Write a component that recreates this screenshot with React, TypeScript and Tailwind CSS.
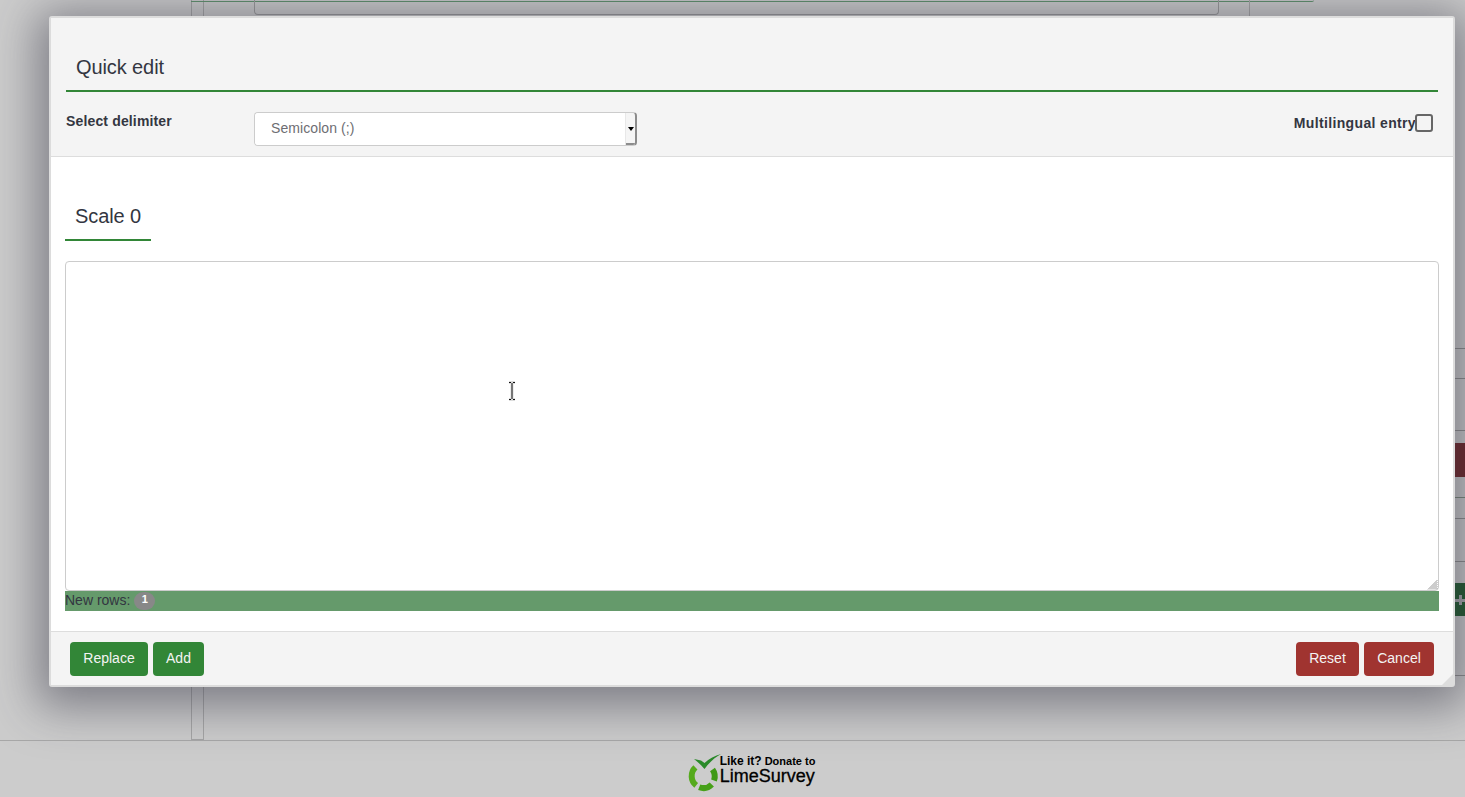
import React from "react";

function Btn({ label, tone, w }: { label: string; tone: "green" | "red"; w: string }) {
  return (
    <button
      className={
        (tone === "green" ? "bg-[#328637] " : "bg-[#a03430] ") +
        w +
        " h-[34px] pb-[2px] rounded-[4px] text-[14px] leading-[20px] text-[#f4f4f4]"
      }
    >
      {label}
    </button>
  );
}

function Logo() {
  return (
    <div className="flex items-start text-black ml-[36px]">
      <svg className="mt-[1px] overflow-visible" width="34" height="38" viewBox="0 0 34 38">
        <g fill="none" strokeWidth="6">
          <path d="M9.4 15.4A11.8 11.8 0 0 0 10.2 33.3" stroke="#55aa1c" />
          <path d="M13.2 35.2A11.8 11.8 0 0 0 25.8 32.5" stroke="#46a018" />
          <path d="M28 28.5A11.8 11.8 0 0 0 26.5 17.5" stroke="#3f9a16" />
        </g>
        <path d="M8 7L15 8.5L18.5 11C23 6.5 29 3.5 35 2C28 6 23 11 18.5 17C15 13 12 10 8 7Z" fill="#2a8a2a" />
      </svg>
      <div className="flex flex-col font-['Liberation_Sans',sans-serif] mt-[5px]">
        <div className="flex items-baseline gap-[3px] h-[11px] leading-[11px] font-bold">
          <span className="text-[12px]">Like it?</span>
          <span className="text-[11px]">Donate to</span>
        </div>
        <div className="text-[18px] leading-[18px] [-webkit-text-stroke:0.3px_black]">LimeSurvey</div>
      </div>
    </div>
  );
}

export default function App() {
  return (
    <div className="relative flex flex-col w-[1465px] h-[797px] overflow-hidden bg-[#cccccc] font-['Liberation_Sans',sans-serif] text-[14px] text-[#333641]">
      {/* page behind the dialog */}
      <div className="relative flex-1">
        <div className="absolute left-[191px] top-0 w-[13px] h-[740px] border-x border-b border-[#a5a5a5]" />
        <div className="absolute left-[191px] top-0 w-[1123px] h-[2px] rounded-br-[4px] border-b border-[#5f8f6c]" />
        <div className="absolute left-[254px] top-0 w-[965px] h-[15px] rounded-b-[4px] border-x border-b border-[#9a9a9a]" />
        <div className="absolute left-[1249px] top-0 w-px h-[20px] bg-[#a5a5a5]" />
        <div className="absolute left-[1440px] top-[348px] w-[25px] h-px bg-[#8f8f8f]" />
        <div className="absolute left-[1440px] top-[378px] w-[25px] h-px bg-[#8f8f8f]" />
        <div className="absolute left-[1440px] top-[430px] w-[25px] h-px bg-[#8f8f8f]" />
        <div className="absolute left-[1440px] top-[443px] w-[25px] h-[34px] bg-[#6f2527]" />
        <div className="absolute left-[1440px] top-[497px] w-[25px] h-px bg-[#7d8a7d]" />
        <div className="absolute left-[1440px] top-[518px] w-[25px] h-px bg-[#8f8f8f]" />
        <div className="absolute left-[1440px] top-[561px] w-[25px] h-px bg-[#8f8f8f]" />
        <div className="absolute left-[1440px] top-[583px] w-[25px] h-[33px] bg-[#1f5a2c] flex items-center justify-end">
          <span className="relative block w-[10px] h-[10px]">
            <span className="absolute left-[4px] top-0 w-[3px] h-[10px] bg-[#a9a9ac]" />
            <span className="absolute left-0 top-[4px] w-[10px] h-[3px] bg-[#a9a9ac]" />
          </span>
        </div>
        <div className="absolute left-[1440px] top-[675px] w-[25px] h-px bg-[#8f8f8f]" />
      </div>
      <footer className="h-[57px] border-t border-[#a8a8a8] flex justify-center pt-[10px]">
        <Logo />
      </footer>

      {/* dialog */}
      <div className="absolute left-[49px] top-[16px] w-[1406px] h-[671px] flex flex-col bg-white border-2 border-[#dcdcdc] rounded-[3px] shadow-[0_8px_45px_12px_rgba(50,50,65,0.5)]">
        <div className="h-[139px] shrink-0 bg-[#f4f4f4] border-b border-[#dddddd] px-[15px]">
          <div className="h-[74px] border-b-2 border-[#328637] pt-[35px] pl-[10px]">
            <h2 className="text-[20px] leading-[28px] tracking-[-0.1px]">Quick edit</h2>
          </div>
          <div className="flex items-start pt-[20px]">
            <label className="w-[188px] font-bold leading-[20px] -mt-[1px] tracking-[0.15px]">Select delimiter</label>
            <div className="flex w-[383px] h-[34px] rounded-[4px] border border-[#cccccc] bg-[#f5f5f5] overflow-hidden border-r-[2px] border-r-[#8c8c8c]">
              <div className="w-[371px] bg-white pl-[16px] leading-[31px] text-[#6e6e73] border-r border-[#e8e8e8] tracking-[0.08px]">Semicolon (;)</div>
              <div className="flex-1 flex items-center justify-center pt-[1px] border-b-[2px] border-b-[#8c8c8c]">
                <span className="block w-0 h-0 border-x-[3px] border-x-transparent border-t-[4px] border-t-black" />
              </div>
            </div>
            <div className="ml-auto flex items-center mr-[5px] mt-[2px]">
              <span className="font-bold leading-[18px] tracking-[0.35px]">Multilingual entry</span>
              <span className="block w-[18px] h-[18px] rounded-[3px] border-2 border-[#666666] -ml-[1px]" />
            </div>
          </div>
        </div>

        <div className="flex-1 flex flex-col px-[14px]">
          <div className="w-[86px] h-[84px] shrink-0 border-b-2 border-[#328637] pt-[45px] pl-[10px]">
            <span className="text-[20px] leading-[28px] block tracking-[-0.1px]">Scale 0</span>
          </div>
          <div className="relative mt-[20px] w-[1374px] h-[330px] shrink-0">
            <textarea className="block w-full h-full bg-white border border-[#cccccc] rounded-[4px] outline-none resize-none" />
            <svg className="absolute right-[1px] bottom-[1px]" width="11" height="11" viewBox="0 0 11 11">
              <path d="M1 10.5L10.5 1M3 10.5L10.5 3M5 10.5L10.5 5M7 10.5L10.5 7M9 10.5L10.5 9" stroke="#9a9a9a" strokeWidth="1" fill="none" />
            </svg>
          </div>
          <div className="w-[1374px] h-[20px] bg-[#659a6b] flex items-center">
            <span className="leading-[18px] pb-[2px]">New rows:</span>
            <span className="ml-[4px] w-[21px] h-[18px] rounded-full bg-[#888888] text-white text-[11px] font-bold flex items-center justify-center pb-[3px]">1</span>
          </div>
        </div>

        <div className="relative h-[54px] shrink-0 bg-[#f4f4f4] border-t border-[#dddddd] flex items-start pt-[10px] pl-[19px] pr-[19px] gap-[5px]">
          <Btn label="Replace" tone="green" w="w-[78px]" />
          <Btn label="Add" tone="green" w="w-[51px]" />
          <div className="ml-auto flex gap-[5px]">
            <Btn label="Reset" tone="red" w="w-[63px]" />
            <Btn label="Cancel" tone="red" w="w-[70px]" />
          </div>
          <svg className="absolute right-0 bottom-0" width="11" height="11" viewBox="0 0 11 11">
            <path d="M11 0V11H0Z" fill="#dddddd" />
          </svg>
        </div>
      </div>

      {/* text cursor */}
      <svg className="absolute left-[507px] top-[381px]" width="10" height="20" viewBox="0 0 10 20">
        <path d="M2 1.5H8M5 2V18M2 18.5H8" fill="none" stroke="#dcdcdc" strokeWidth="3" />
        <path d="M2 1.5H4M6 1.5H8M5 2V18M2 18.5H4M6 18.5H8" fill="none" stroke="#111" strokeWidth="1" />
      </svg>
    </div>
  );
}
